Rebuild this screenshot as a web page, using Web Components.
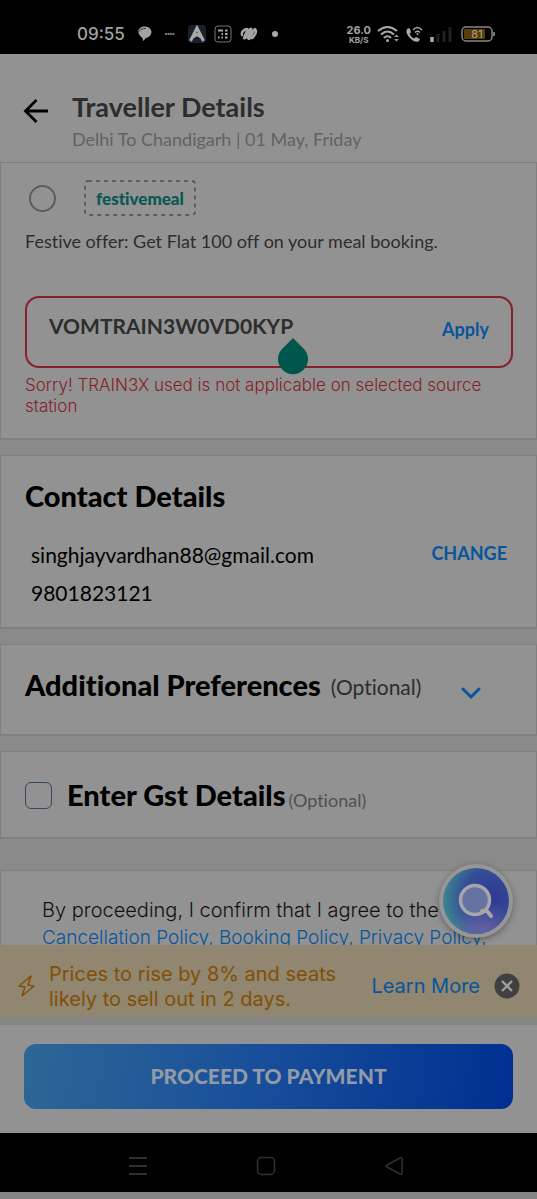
<!DOCTYPE html>
<html lang="en">
<head>
<meta charset="utf-8">
<meta name="viewport" content="width=device-width, initial-scale=1">
<title>Traveller Details</title>
<style>
html, body { margin: 0; height: 100%; }
body {
  background: #929292; color: #000; font-family: Lato, "Liberation Sans", sans-serif; overflow: hidden;
  font-variant-ligatures: none;
  --card: #929292; --gap: #8a8a8a; --line: #7f7f7f; --ink: #2d2d2d; --link: #07559b; --error: #86202a;
  --alt: Inter, "Liberation Sans", sans-serif;
}
</style>
</head>
<body>
<traveller-app></traveller-app>
<script>
const define = (name, html) => {
  const template = document.createElement('template');
  template.innerHTML = '<style>*{box-sizing:border-box}button{font:inherit;background:none;border:0;padding:0;margin:0;cursor:pointer}svg{display:block;flex:none}h1,h2,p{margin:0}a{color:var(--link);text-decoration:none}</style>' + html;
  customElements.define(name, class extends HTMLElement {
    constructor() {
      super();
      this.attachShadow({ mode: 'open' }).append(template.content.cloneNode(true));
    }
  });
};

define('status-bar', `
<style>
:host { display: flex; align-items: center; justify-content: space-between; height: 54px; padding: 14px 42px 0 77px; background: #000; color: #a3a3a3; flex: none; }
.group { display: flex; align-items: center; }
.left { gap: 8px; }
.right { gap: 6px; }
.time { font: 500 17px/24px var(--alt); padding-right: 4px; }
.speed { display: grid; justify-items: center; font: 700 11px/12px var(--alt); }
.speed small { font-size: 8px; line-height: 8px; }
</style>
<div class="group left">
  <span class="time">09:55</span>
  <svg width="15" height="16" viewBox="0 0 15 16"><path d="M1 5Q3 0 8 .5Q14 1 14.500 6Q14 11 9 12L6 15L5.500 12Q2 10 1 5Z" fill="#a3a3a3"/><path d="M1.500 6Q3 2.500 9 2.500" stroke="#333" fill="none"/></svg>
  <svg width="20" height="4" viewBox="0 0 20 4"><path d="M5 2H15" stroke="#777" stroke-width="2" stroke-dasharray="2 .5"/></svg>
  <svg width="18" height="18" viewBox="0 0 18 18"><rect width="18" height="18" rx="3" fill="#18222d"/><path d="M2.500 16L9 3L15.500 16M5 12L9 9.500L13 12" fill="none" stroke="#aaa" stroke-width="3"/></svg>
  <svg width="18" height="18" viewBox="0 0 18 18"><rect x="1" y="1" width="16" height="16" rx="3" fill="none" stroke="#777"/><path d="M4 5.500H9M11 5.500H13.500M7.500 9H9M11 9H13.500M4 12.500H5.500M7.500 12.500H9M11 12.500H13.500" stroke="#aaa" stroke-width="1.800"/></svg>
  <svg width="18" height="18" viewBox="0 0 18 18"><path d="M2 10Q1 6 6.500 4Q8 4 7 6L4 13Q5 14 6 12L10 4Q12 3 11 6L8 13Q9 15 10 13L14 5Q15 3 15.500 5Q17 7 14 11L12 13" fill="none" stroke="#a3a3a3" stroke-width="2.500" stroke-linecap="round" stroke-linejoin="round"/></svg>
  <svg width="18" height="18" viewBox="0 0 18 18"><circle cx="9" cy="9" r="3" fill="#aaa"/></svg>
</div>
<div class="group right">
  <div class="speed"><span>26.0</span><small>KB/S</small></div>
  <svg width="22" height="18" viewBox="0 0 22 18"><g fill="none" stroke="#aaa" stroke-width="2"><path d="M1 6Q10.500-2 20 6M4 9.500Q10.500 3.500 17 9.500M7 13Q10.500 9.500 14 13"/></g><circle cx="10.500" cy="15.500" r="1.500" fill="#aaa"/><path d="M17 12L19.500 9.500L22 12ZM17 14L19.500 16.500L22 14Z" fill="#999"/></svg>
  <svg width="18" height="17" viewBox="0 0 18 17"><path d="M2 3L4.500 2L6 6L4.500 8Q6 11 9 12.500L11 11L15 13L13.500 15.500Q10 17 5 12Q0 7 2 3Z" fill="#aaa"/><path d="M8 4Q12.500-1 17 4M10 6.500Q12.500 4 15 6.500" fill="none" stroke="#aaa" stroke-width="1.300"/><circle cx="12.500" cy="8" r="1" fill="#aaa"/></svg>
  <svg width="24" height="17" viewBox="0 0 24 17"><path d="M3 11V16" stroke="#aaa" stroke-width="3.500"/><path d="M9 8V16M15 5V16M21 1V16" stroke="#202020" stroke-width="3"/></svg>
  <svg width="36" height="17" viewBox="0 0 36 17"><rect x="3" y="1" width="30" height="14" rx="4" fill="none" stroke="#888" stroke-width="1.500"/><path d="M35 6V10" stroke="#777" stroke-width="2"/><rect x="5" y="3" width="21" height="10" rx="1" fill="#5b3d05"/><text x="18" y="12" text-anchor="middle" font-family="Inter, sans-serif" font-size="11" fill="#aaa58c">81</text></svg>
</div>`);

define('page-header', `
<style>
:host { display: flex; gap: 22px; height: 109px; padding: 36px 22px 0; border-bottom: 1px solid #7f7f7f; flex: none; background: var(--card); }
button { align-self: flex-start; width: 28px; padding-top: 7px; }
h1 { font-size: 27px; line-height: 34px; font-weight: 700; color: var(--ink); }
p { font-size: 18px; line-height: 30px; color: #626262; }
</style>
<button aria-label="Back"><svg width="28" height="28" viewBox="0 0 28 28"><path d="M26 14H4M14.500 3L3.500 14L14.500 25" fill="none" stroke="#000" stroke-width="2.800"/></svg></button>
<div><h1>Traveller Details</h1><p>Delhi To Chandigarh | 01 May, Friday</p></div>`);

define('info-card', `
<style>:host { display: block; flex: none; background: var(--card); border: 2px solid var(--line); border-width: 1px 1px 2px; } :host(.first) { border-top: 0; }</style><slot></slot>`);

define('coupon-offer', `
<style>
:host { display: block; padding: 17px 23px 21px 24px; color: var(--ink); }
label { display: flex; align-items: center; gap: 28px; padding-left: 4px; }
input[type=radio] { appearance: none; width: 27px; height: 27px; margin: 0; border: 2px solid #5c5c5c; border-radius: 50%; }
svg.tag { width: 112px; height: 36px; }
.code { display: grid; align-items: center; justify-items: center; }
.code > * { grid-area: 1 / 1; }
.code b { font-size: 17px; font-weight: 900; color: #08594f; }
p { font-size: 18px; line-height: 24px; }
.desc { padding: 13px 0 43px; }
.field { position: relative; display: flex; align-items: center; height: 72px; padding: 0 22px; border: 2px solid #86202a; border-radius: 14px; }
.field input { flex: 1; min-width: 0; padding: 0 0 12px; border: 0; outline: 0; background: none; font: 700 21px/28px Lato, sans-serif; color: var(--ink); }
.field button { font-size: 18px; font-weight: 700; color: var(--link); padding-bottom: 6px; }
.handle { position: absolute; left: 250px; top: 40px; }
.error { color: var(--error); font: 300 17px/21px var(--alt); padding-top: 7px; }
</style>
<label><input type="radio" name="offer" aria-label="festivemeal">
<span class="code"><svg class="tag" viewBox="0 0 112 36"><rect x="1" y="1" width="110" height="34" rx="3" fill="none" stroke="#4c4c4c" stroke-width="1.500" stroke-dasharray="4 4"/></svg><b>festivemeal</b></span></label>
<p class="desc">Festive offer: Get Flat 100 off on your meal booking.</p>
<div class="field"><input type="text" aria-label="Coupon code" value="VOMTRAIN3W0VD0KYP"><button>Apply</button>
<svg class="handle" width="32" height="38" viewBox="0 0 32 38"><path d="M16 0L26 10A15 15 0 1 1 6 10Z" fill="#00564b"/></svg></div>
<p class="error">Sorry! TRAIN3X used is not applicable on selected source station</p>`);

define('contact-details', `
<style>
:host { display: block; padding: 22px 29px 22px 24px; }
h2 { font-size: 29px; line-height: 36px; font-weight: 900; }
.row { display: flex; justify-content: space-between; align-items: flex-start; padding: 29px 0 0 6px; }
.row p { line-height: 24px; }
p { font-size: 21px; line-height: 24px; }
.phone { padding: 14px 0 0 6px; }
button { font-size: 18px; font-weight: 700; color: var(--link); line-height: 21px; }
</style>
<h2>Contact Details</h2>
<div class="row"><p>singhjayvardhan88@gmail.com</p><button>CHANGE</button></div>
<p class="phone">9801823121</p>`);

define('extra-preferences', `
<style>
:host { display: block; }
button { display: flex; align-items: center; width: 100%; padding: 22px 54px 31px 24px; color: #000; text-align: left; }
h2 { font-size: 29px; line-height: 36px; font-weight: 900; }
span { flex: 1; font-size: 21px; line-height: 32px; padding: 4px 0 0 10px; color: var(--ink); }
svg { margin-top: 18px; }
</style>
<button aria-expanded="false"><h2>Additional Preferences</h2><span>(Optional)</span>
<svg width="22" height="14" viewBox="0 0 22 14"><path d="M3 2L11 10L19 2" fill="none" stroke="#07559b" stroke-width="3" stroke-linecap="round"/></svg></button>`);

define('gst-details', `
<style>
:host { display: block; padding: 26px 24px 25px; }
label { display: flex; align-items: center; gap: 15px; }
input { appearance: none; width: 27px; height: 27px; margin: 0; border: 1px solid #34475d; border-radius: 6px; }
.text { display: flex; align-items: flex-end; gap: 3px; }
b { font-size: 29px; line-height: 34px; font-weight: 900; }
small { font-size: 18px; line-height: 24px; color: #505050; }
</style>
<label><input type="checkbox"><span class="text"><b>Enter Gst Details</b><small>(Optional)</small></span></label>`);

define('terms-note', `
<style>:host { display: block; padding: 26px 16px 26px 41px; } p { font: 300 20px/27px var(--alt); color: #111; } a { font-size: 19px; }</style>
<p>By proceeding, I confirm that I agree to the <br><a href="#cancel">Cancellation Policy</a><a href="#booking">, Booking Policy</a><a href="#privacy">, Privacy Policy,</a></p>`);

define('price-banner', `
<style>
:host { display: flex; align-items: center; flex: none; height: 72px; padding: 10px 17px 0 16px; background: #918670; color: #805006; }
p { flex: 1; max-width: 312px; margin-right: auto; padding: 2px 0 0 12px; font: 400 20px/25px var(--alt); }
a { font: 400 20px/26px var(--alt); margin-right: 14px; }
</style>
<svg width="21" height="24" viewBox="0 0 21 24"><path d="M15 2L3 12L9 13L6 22L18 12L12 11Z" fill="none" stroke="#805006" stroke-width="1.500" stroke-linejoin="round"/></svg>
<p>Prices to rise by 8% and seats likely to sell out in 2 days.</p><a href="#more">Learn More</a>
<button aria-label="Close"><svg width="26" height="26" viewBox="0 0 26 26"><circle cx="13" cy="13" r="12.500" fill="#404040"/><path d="M8 8L18 18M18 8L8 18" stroke="#a0a0a0" stroke-width="2.300"/></svg></button>`);

define('search-bubble', `
<style>:host { display: block; position: absolute; right: 22px; bottom: 4px; } svg { filter: drop-shadow(0 2px 3px #0005); }</style>
<button aria-label="Search"><svg width="78" height="78" viewBox="0 0 78 78">
<defs><radialGradient id="g" cx=".75" cy=".45" r=".8"><stop offset="0" stop-color="#303991"/><stop offset=".55" stop-color="#344d96"/><stop offset=".9" stop-color="#3b8092"/></radialGradient>
<radialGradient id="v" cx=".6" cy=".98" r=".5"><stop offset="0" stop-color="#6660a3"/><stop offset="1" stop-color="#6660a3" stop-opacity="0"/></radialGradient></defs>
<circle cx="39" cy="41" r="37" fill="#969696"/><circle cx="39" cy="41" r="33" fill="url(#g)"/><circle cx="39" cy="41" r="33" fill="url(#v)"/>
<circle cx="38" cy="40" r="14.500" fill="#6573a0" stroke="#a5a5ab" stroke-width="3.500"/><path d="M45 51L50 51L54 56" fill="none" stroke="#a5a5ab" stroke-width="4" stroke-linecap="round" stroke-linejoin="round"/></svg></button>`);

define('pay-footer', `
<style>
:host { display: block; flex: none; padding: 19px 24px 24px; background: var(--card); border-top: 8px solid #858585; }
button { display: block; width: 100%; height: 65px; padding-bottom: 2px; border-radius: 12px; background: linear-gradient(100deg, #2d6795, #19509a 45%, #002f91); color: #929aa6; font-size: 21px; font-weight: 900; }
</style><button>PROCEED TO PAYMENT</button>`);

define('system-nav', `
<style>
:host { display: grid; grid-template-columns: repeat(3, 128px); justify-content: center; justify-items: center; align-items: center; flex: none; height: 66px; padding: 6px 5px 0 0; background: #000; border-bottom: 7px solid #858585; box-sizing: border-box; }
</style>
<button aria-label="Recent apps"><svg width="20" height="20" viewBox="0 0 20 20"><path d="M1 2H19M1 10H19M1 18H19" stroke="#303030" stroke-width="2"/></svg></button>
<button aria-label="Home"><svg width="20" height="20" viewBox="0 0 20 20"><rect x="1.500" y="1.500" width="17" height="17" rx="4" fill="none" stroke="#303030" stroke-width="1.500"/></svg></button>
<button aria-label="Back"><svg width="20" height="20" viewBox="0 0 20 20"><path d="M16 2L3 9Q1 10 3 11L16 18Q18 19 18 17V3Q18 1 16 2Z" fill="none" stroke="#303030" stroke-width="1.500"/></svg></button>`);

define('traveller-app', `
<style>
:host { display: flex; flex-direction: column; height: 100vh; }
.scroll { flex: 1; min-height: 0; overflow: hidden; background: var(--gap); display: flex; flex-direction: column; gap: 15px; }
.area { flex: 1; min-height: 0; display: flex; flex-direction: column; position: relative; }
.terms { margin-top: 16px; }
</style>
<status-bar></status-bar><page-header></page-header>
<div class="area"><div class="scroll">
<info-card class="first"><coupon-offer></coupon-offer></info-card>
<info-card><contact-details></contact-details></info-card>
<info-card><extra-preferences></extra-preferences></info-card>
<info-card><gst-details></gst-details></info-card>
<info-card class="terms"><terms-note></terms-note></info-card>
</div><search-bubble></search-bubble></div>
<price-banner></price-banner><pay-footer></pay-footer><system-nav></system-nav>`);
</script>
</body>
</html>
